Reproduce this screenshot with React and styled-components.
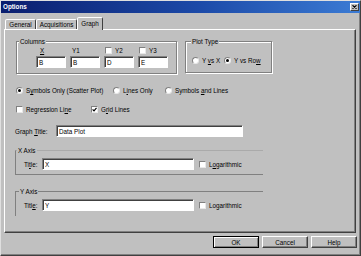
import React from "react";
import styled, { createGlobalStyle } from "styled-components";

const GlobalStyle = createGlobalStyle`
  html, body {
    margin: 0;
    padding: 0;
    background: #c0c0c0;
  }
  body {
    font-family: "Liberation Sans", Arial, sans-serif;
    font-size: 6.3px;
    color: #000;
  }
  * {
    box-sizing: border-box;
  }
`;

const Window = styled.div`
  width: 361px;
  height: 256px;
  display: flex;
  flex-direction: column;
  background: #c0c0c0;
  border: 1px solid;
  border-color: #dfdfdf #404040 #404040 #dfdfdf;
  box-shadow: inset -1px -1px 0 #808080;
`;

const TitleBar = styled.div`
  flex: none;
  height: 12px;
  display: flex;
  align-items: center;
  justify-content: space-between;
  padding: 0 1px 0 2px;
  background: linear-gradient(90deg, #0a1e6e 0%, #1c4aa8 55%, #3b7bd4 100%);
`;

const TitleText = styled.span`
  color: #fff;
  font-weight: bold;
  line-height: 12px;
`;

const CloseButton = styled.span`
  width: 9px;
  height: 8px;
  display: flex;
  align-items: center;
  justify-content: center;
  background: #c0c0c0;
  border: 1px solid;
  border-color: #fff #404040 #404040 #fff;
`;

const Body = styled.div`
  flex: 1;
  display: flex;
  flex-direction: column;
  padding: 0 3px;
`;

const TabStrip = styled.div`
  height: 16px;
  display: flex;
  align-items: flex-end;
  padding-left: 1px;
`;

const Tab = styled.div`
  width: ${(p) => p.$w}px;
  height: ${(p) => (p.$active ? 13 : 10)}px;
  margin-bottom: ${(p) => (p.$active ? -1 : 0)}px;
  padding-bottom: ${(p) => (p.$active ? 1 : 0)}px;
  position: relative;
  z-index: ${(p) => (p.$active ? 1 : 0)};
  display: flex;
  align-items: center;
  justify-content: center;
  line-height: 7px;
  background: #c0c0c0;
  border: 1px solid;
  border-bottom: none;
  border-color: #fff #404040 transparent #fff;
  border-radius: 2px 2px 0 0;
`;

const Panel = styled.div`
  width: 352px;
  height: 204px;
  display: flex;
  flex-direction: column;
  padding: 8px 0 0 10px;
  border: 1px solid;
  border-color: #fff #404040 #404040 #fff;
  box-shadow: inset -1px -1px 0 #808080;
`;

const GroupRow = styled.div`
  display: flex;
  align-items: flex-start;
  gap: 8px;
  padding-left: 1px;
`;

const Group = styled.fieldset`
  width: ${(p) => p.$w}px;
  min-width: 0;
  margin: 0;
  padding: 0;
  border: 1px solid #808080;
  box-shadow: 1px 1px 0 #fff, inset 1px 1px 0 #fff;
`;

const Legend = styled.legend`
  margin-left: ${(p) => p.$offset}px;
  padding: 0 1px;
  line-height: 7px;
  background: #c0c0c0;
`;

const ColumnGrid = styled.div`
  display: grid;
  grid-template-columns: repeat(4, 30px);
  grid-template-rows: 8px 12px;
  column-gap: 4px;
  row-gap: 2px;
  padding: 1px 0 5px 19px;
`;

const ColumnHead = styled.div`
  display: flex;
  align-items: center;
  gap: 3px;
  padding-left: ${(p) => p.$pl}px;
  line-height: 7px;
`;

const PlotChoices = styled.div`
  display: flex;
  gap: 4px;
  padding: 12px 0 8px 6px;
`;

const Option = styled.label`
  display: inline-flex;
  align-items: center;
  gap: 3px;
  height: 7px;
  line-height: 7px;
  white-space: nowrap;
`;

const OptionRow = styled.div`
  margin-top: ${(p) => p.$mt}px;
  padding-left: 1px;
  display: grid;
  grid-template-columns: ${(p) => p.$cols};
`;

const Box = styled.span`
  flex: none;
  width: 7px;
  height: 7px;
  display: flex;
  align-items: center;
  justify-content: center;
  background: #fff;
  border: 1px solid;
  border-color: #808080 #e8e8e8 #e8e8e8 #808080;
`;

const Radio = styled.span`
  flex: none;
  width: 7px;
  height: 7px;
  display: flex;
  align-items: center;
  justify-content: center;
  border-radius: 50%;
  background: #fff;
  border: 1px solid;
  border-color: #808080 #e8e8e8 #e8e8e8 #808080;

  &::after {
    content: "";
    width: 3px;
    height: 3px;
    border-radius: 50%;
    background: ${(p) => (p.$on ? "#000" : "transparent")};
  }
`;

const FieldRow = styled.div`
  margin-top: 12px;
  height: 12px;
  display: flex;
  align-items: center;
`;

const FieldLabel = styled.span`
  width: ${(p) => p.$w}px;
  flex: none;
  line-height: 7px;
`;

const Field = styled.input`
  width: ${(p) => p.$w}px;
  height: 12px;
  flex: none;
  margin: 0;
  padding: 0 0 0 2px;
  font: inherit;
  color: #000;
  background: #fff;
  border: 1px solid;
  border-color: #808080 #fff #fff #808080;
  box-shadow: inset 1px 1px 0 #404040;
  outline: none;
`;

const AxisGroup = styled.fieldset`
  width: 248px;
  min-width: 0;
  margin: ${(p) => p.$mt}px 0 0 0;
  padding: 0;
  border: 0 solid #808080;
  border-left-width: 1px;
  border-top: 1px solid ${(p) => (p.$faint ? "#aaaaaa" : "#808080")};
  border-bottom: ${(p) => (p.$open ? "none" : "1px solid #808080")};
`;

const AxisContent = styled.div`
  display: flex;
  align-items: center;
  gap: 0;
  padding: 4px 0 ${(p) => p.$pb}px 8px;

  & > label {
    margin-left: 5px;
  }
`;

const ButtonRow = styled.div`
  margin-top: 3px;
  display: flex;
  justify-content: flex-end;
  gap: 3px;
`;

const Button = styled.div`
  width: 46px;
  height: 12px;
  display: flex;
  align-items: center;
  justify-content: center;
  line-height: 7px;
  background: #c0c0c0;
  border: 1px solid;
  border-color: ${(p) => (p.$default ? "#000" : "#fff #404040 #404040 #fff")};
  box-shadow: ${(p) =>
    p.$default
      ? "inset 1px 1px 0 #fff, inset -1px -1px 0 #808080"
      : "inset -1px -1px 0 #808080"};
`;

const Check = () => (
  <svg width="5" height="5" viewBox="0 0 5 5">
    <path d="M0.6 2.4 L2 3.8 L4.5 0.9" fill="none" stroke="#000" strokeWidth="1.2" />
  </svg>
);

const CheckOption = ({ checked, children }) => (
  <Option>
    <Box>{checked && <Check />}</Box>
    <span>{children}</span>
  </Option>
);

const RadioOption = ({ on, children }) => (
  <Option>
    <Radio $on={on} />
    <span>{children}</span>
  </Option>
);

export default function App() {
  return (
    <>
      <GlobalStyle />
      <Window>
        <TitleBar>
          <TitleText>Options</TitleText>
          <CloseButton>
            <svg width="5" height="4" viewBox="0 0 5 4">
              <path d="M0.5 0.3 L4.5 3.7 M4.5 0.3 L0.5 3.7" stroke="#000" strokeWidth="1.1" />
            </svg>
          </CloseButton>
        </TitleBar>

        <Body>
          <TabStrip>
            <Tab $w={31}>General</Tab>
            <Tab $w={41}>Acquisitions</Tab>
            <Tab $w={26} $active>Graph</Tab>
          </TabStrip>

          <Panel>
            <GroupRow>
              <Group $w={161}>
                <Legend $offset={2}>Columns</Legend>
                <ColumnGrid>
                  <ColumnHead $pl={4}><u>X</u></ColumnHead>
                  <ColumnHead $pl={2}>Y1</ColumnHead>
                  <ColumnHead $pl={1}><Box />Y2</ColumnHead>
                  <ColumnHead $pl={1}><Box />Y3</ColumnHead>
                  <Field $w={30} readOnly defaultValue="B" />
                  <Field $w={30} readOnly defaultValue="B" />
                  <Field $w={30} readOnly defaultValue="D" />
                  <Field $w={30} readOnly defaultValue="E" />
                </ColumnGrid>
              </Group>

              <Group $w={87}>
                <Legend $offset={5}>Plot Type</Legend>
                <PlotChoices>
                  <RadioOption>Y <u>v</u>s X</RadioOption>
                  <RadioOption on>Y vs Ro<u>w</u></RadioOption>
                </PlotChoices>
              </Group>
            </GroupRow>

            <OptionRow $mt={13} $cols="97px 52px auto">
              <RadioOption on>S<u>y</u>mbols Only (Scatter Plot)</RadioOption>
              <RadioOption>L<u>i</u>nes Only</RadioOption>
              <RadioOption>Symbols <u>a</u>nd Lines</RadioOption>
            </OptionRow>

            <OptionRow $mt={12} $cols="75px auto">
              <CheckOption>Regression Li<u>n</u>e</CheckOption>
              <CheckOption checked>G<u>r</u>id Lines</CheckOption>
            </OptionRow>

            <FieldRow>
              <FieldLabel $w={41}>Graph <u>T</u>itle:</FieldLabel>
              <Field $w={187} readOnly defaultValue="Data Plot" />
            </FieldRow>

            <AxisGroup $mt={10} $faint>
              <Legend $offset={1}>X Axis</Legend>
              <AxisContent $pb={4}>
                <FieldLabel $w={18}>Ti<u>t</u>le:</FieldLabel>
                <Field $w={152} readOnly defaultValue="X" />
                <CheckOption>L<u>o</u>garithmic</CheckOption>
              </AxisContent>
            </AxisGroup>

            <AxisGroup $mt={13} $open>
              <Legend $offset={3}>Y Axis</Legend>
              <AxisContent $pb={5}>
                <FieldLabel $w={18}>Titl<u>e</u>:</FieldLabel>
                <Field $w={152} readOnly defaultValue="Y" />
                <CheckOption>Lo<u>g</u>arithmic</CheckOption>
              </AxisContent>
            </AxisGroup>
          </Panel>

          <ButtonRow>
            <Button $default>OK</Button>
            <Button>Cancel</Button>
            <Button>Help</Button>
          </ButtonRow>
        </Body>
      </Window>
    </>
  );
}
